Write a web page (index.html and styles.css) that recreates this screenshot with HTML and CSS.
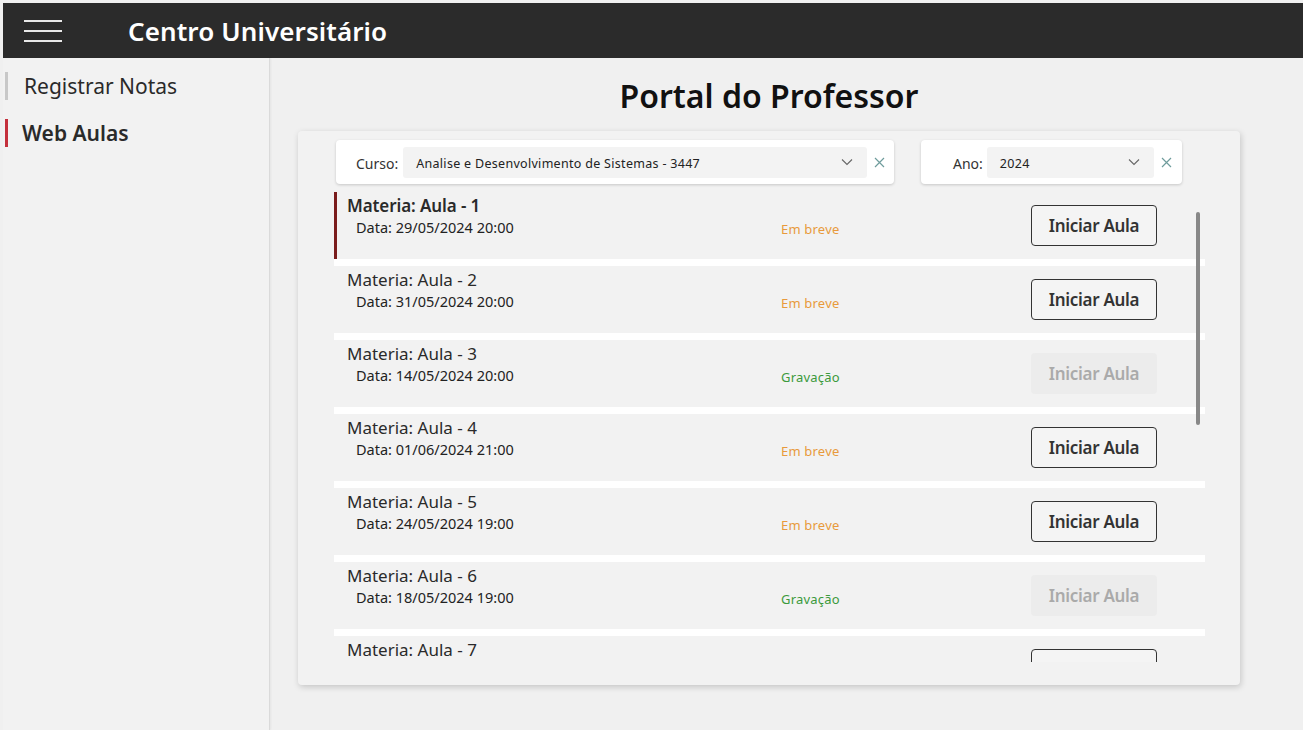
FILE: index.html
```html
<!DOCTYPE html>
<html lang="pt">
<head>
<meta charset="utf-8">
<title>Portal do Professor</title>
<link rel="stylesheet" href="styles.css">
</head>
<body>
<div class="app">
  <header class="topbar">
    <button class="burger" aria-label="Menu"><span></span><span></span><span></span></button>
    <div class="brand">Centro Universitário</div>
  </header>
  <div class="body">
    <nav class="sidebar">
      <a class="nav-item">Registrar Notas</a>
      <a class="nav-item active">Web Aulas</a>
    </nav>
    <main class="main">
      <div class="content">
        <h1 class="page-title">Portal do Professor</h1>
        <section class="card">
          <div class="filters">
            <div class="filter filter-curso">
              <span class="filter-label">Curso:</span>
              <div class="select"><span class="select-text">Analise e Desenvolvimento de Sistemas - 3447</span>
                <svg class="chev" width="12" height="8" viewBox="0 0 12 8"><path d="M1 1.5 L6 6.5 L11 1.5" fill="none" stroke="#666" stroke-width="1.1"/></svg>
              </div>
              <svg class="clear" width="11" height="11" viewBox="0 0 11 11"><path d="M1 1 L10 10 M10 1 L1 10" stroke="#6f9c9c" stroke-width="1.2"/></svg>
            </div>
            <div class="filter filter-ano">
              <span class="filter-label">Ano:</span>
              <div class="select"><span class="select-text">2024</span>
                <svg class="chev" width="12" height="8" viewBox="0 0 12 8"><path d="M1 1.5 L6 6.5 L11 1.5" fill="none" stroke="#666" stroke-width="1.1"/></svg>
              </div>
              <svg class="clear" width="11" height="11" viewBox="0 0 11 11"><path d="M1 1 L10 10 M10 1 L1 10" stroke="#6f9c9c" stroke-width="1.2"/></svg>
            </div>
          </div>
          <div class="list-wrap">
            <div class="list">
              <div class="row selected">
                <div class="info"><div class="title">Materia: Aula - 1</div><div class="date">Data: 29/05/2024 20:00</div></div>
                <div class="status soon">Em breve</div>
                <button class="btn">Iniciar Aula</button>
              </div>
              <div class="row">
                <div class="info"><div class="title">Materia: Aula - 2</div><div class="date">Data: 31/05/2024 20:00</div></div>
                <div class="status soon">Em breve</div>
                <button class="btn">Iniciar Aula</button>
              </div>
              <div class="row">
                <div class="info"><div class="title">Materia: Aula - 3</div><div class="date">Data: 14/05/2024 20:00</div></div>
                <div class="status rec">Gravação</div>
                <button class="btn disabled">Iniciar Aula</button>
              </div>
              <div class="row">
                <div class="info"><div class="title">Materia: Aula - 4</div><div class="date">Data: 01/06/2024 21:00</div></div>
                <div class="status soon">Em breve</div>
                <button class="btn">Iniciar Aula</button>
              </div>
              <div class="row">
                <div class="info"><div class="title">Materia: Aula - 5</div><div class="date">Data: 24/05/2024 19:00</div></div>
                <div class="status soon">Em breve</div>
                <button class="btn">Iniciar Aula</button>
              </div>
              <div class="row">
                <div class="info"><div class="title">Materia: Aula - 6</div><div class="date">Data: 18/05/2024 19:00</div></div>
                <div class="status rec">Gravação</div>
                <button class="btn disabled">Iniciar Aula</button>
              </div>
              <div class="row">
                <div class="info"><div class="title">Materia: Aula - 7</div></div>
                <div class="status"></div>
                <button class="btn" aria-label="Iniciar Aula"></button>
              </div>
            </div>
            <div class="thumb"></div>
          </div>
        </section>
      </div>
    </main>
  </div>
</div>
</body>
</html>
```
FILE: styles.css
```css
* { box-sizing: border-box; }
html, body { margin: 0; height: 100%; }
body {
  background: #f0f0f0;
  font-family: "Noto Sans", "Open Sans", sans-serif;
  color: #222;
  padding: 3px 0 0 3px;
  overflow: hidden;
}
.app { display: flex; flex-direction: column; height: 727px; }
.topbar {
  height: 55px;
  background: #2b2b2b;
  display: flex;
  align-items: center;
  flex-shrink: 0;
}
.burger {
  width: 38px; height: 22px;
  margin-left: 21px;
  margin-top: 1px;
  padding: 0; border: 0; background: none;
  display: flex; flex-direction: column; justify-content: space-between;
}
.burger span { display: block; height: 2px; background: #e8e8e8; }
.brand {
  margin-left: 66px;
  color: #fff;
  font-size: 26px;
  font-weight: 600;
  letter-spacing: 0.1px;
}
.body { flex: 1; display: flex; min-height: 0; }
.sidebar {
  width: 267px;
  flex-shrink: 0;
  background: #f2f2f2;
  border-right: 1px solid #dadada;
  box-shadow: 1px 0 2px rgba(0,0,0,0.05);
  padding-top: 14px;
  display: flex; flex-direction: column; gap: 19px;
}
.nav-item {
  display: block;
  height: 28px;
  line-height: 28px;
  border-left: 3px solid #c8c8c8;
  margin-left: 2px;
  padding-left: 16px;
  font-size: 21px;
  color: #2a2a2a;
}
.nav-item.active {
  border-left-color: #c4303c;
  font-weight: 600;
  padding-left: 14px;
}
.main { flex: 1; display: flex; }
.content { width: 942px; margin-left: 28px; }
.page-title {
  margin: 18px 0 0;
  height: 55px;
  text-align: center;
  font-size: 32px;
  font-weight: 600;
  color: #111;
  line-height: 40px;
}
.card {
  background: #f2f2f2;
  border-radius: 4px;
  box-shadow: 1px 2px 6px rgba(0,0,0,0.18);
  height: 554px;
  padding: 9px 35px 0 36px;
}
.filters { display: flex; gap: 27px; margin-left: 2px; height: 44px; }
.filter {
  background: #fff;
  border-radius: 4px;
  box-shadow: 0 1px 3px rgba(0,0,0,0.18);
  display: flex; align-items: center;
  font-size: 14px; color: #333;
}
.filter-curso { width: 558px; padding-left: 20px; }
.filter-ano { width: 261px; padding-left: 32px; }
.filter-label { margin-right: 5px; padding-top: 2px; }
.filter-ano .filter-label { margin-right: 4px; }
.select {
  height: 31px;
  background: #f3f3f3;
  border-radius: 3px;
  display: flex; align-items: center; justify-content: space-between;
  padding: 0 14px 0 13px;
  font-size: 12.5px;
  color: #222;
  letter-spacing: 0.3px;
}
.select-text { padding-top: 3px; }
.filter-curso .select { width: 464px; }
.filter-ano .select { width: 167px; }
.clear { margin-left: 7px; }
.list-wrap { position: relative; margin-top: 8px; height: 470px; overflow: hidden; }
.list { display: flex; flex-direction: column; }
.row {
  height: 74px;
  flex-shrink: 0;
  border-bottom: 7px solid #fff;
  padding-left: 13px;
  display: grid;
  grid-template-columns: 434px 250px 126px;
  align-items: start;
}
.row.selected { box-shadow: inset 3px 0 0 #7a1c1c; }
.title { font-size: 17px; line-height: 22px; margin-top: 3px; color: #2a2a2a; }
.row.selected .title { font-weight: 600; letter-spacing: -0.1px; }
.date { font-size: 14.5px; line-height: 19px; margin-top: 1px; padding-left: 9px; color: #222; }
.status { font-size: 13px; margin-top: 28px; letter-spacing: 0.2px; }
.status.soon { color: #e89a3c; }
.status.rec { color: #3c9a3c; }
.btn {
  margin-top: 13px;
  height: 41px; width: 126px;
  background: #f4f4f4;
  border: 1px solid #333;
  border-radius: 4px;
  font-family: inherit;
  font-size: 17px; font-weight: 600;
  color: #333;
  letter-spacing: -0.3px;
  padding: 0;
}
.btn.disabled { border-color: transparent; background: #ececec; color: #aaa; }
.thumb {
  position: absolute;
  right: 5px; top: 20px;
  width: 4px; height: 213px;
  background: #888;
  border-radius: 2px;
}
```
